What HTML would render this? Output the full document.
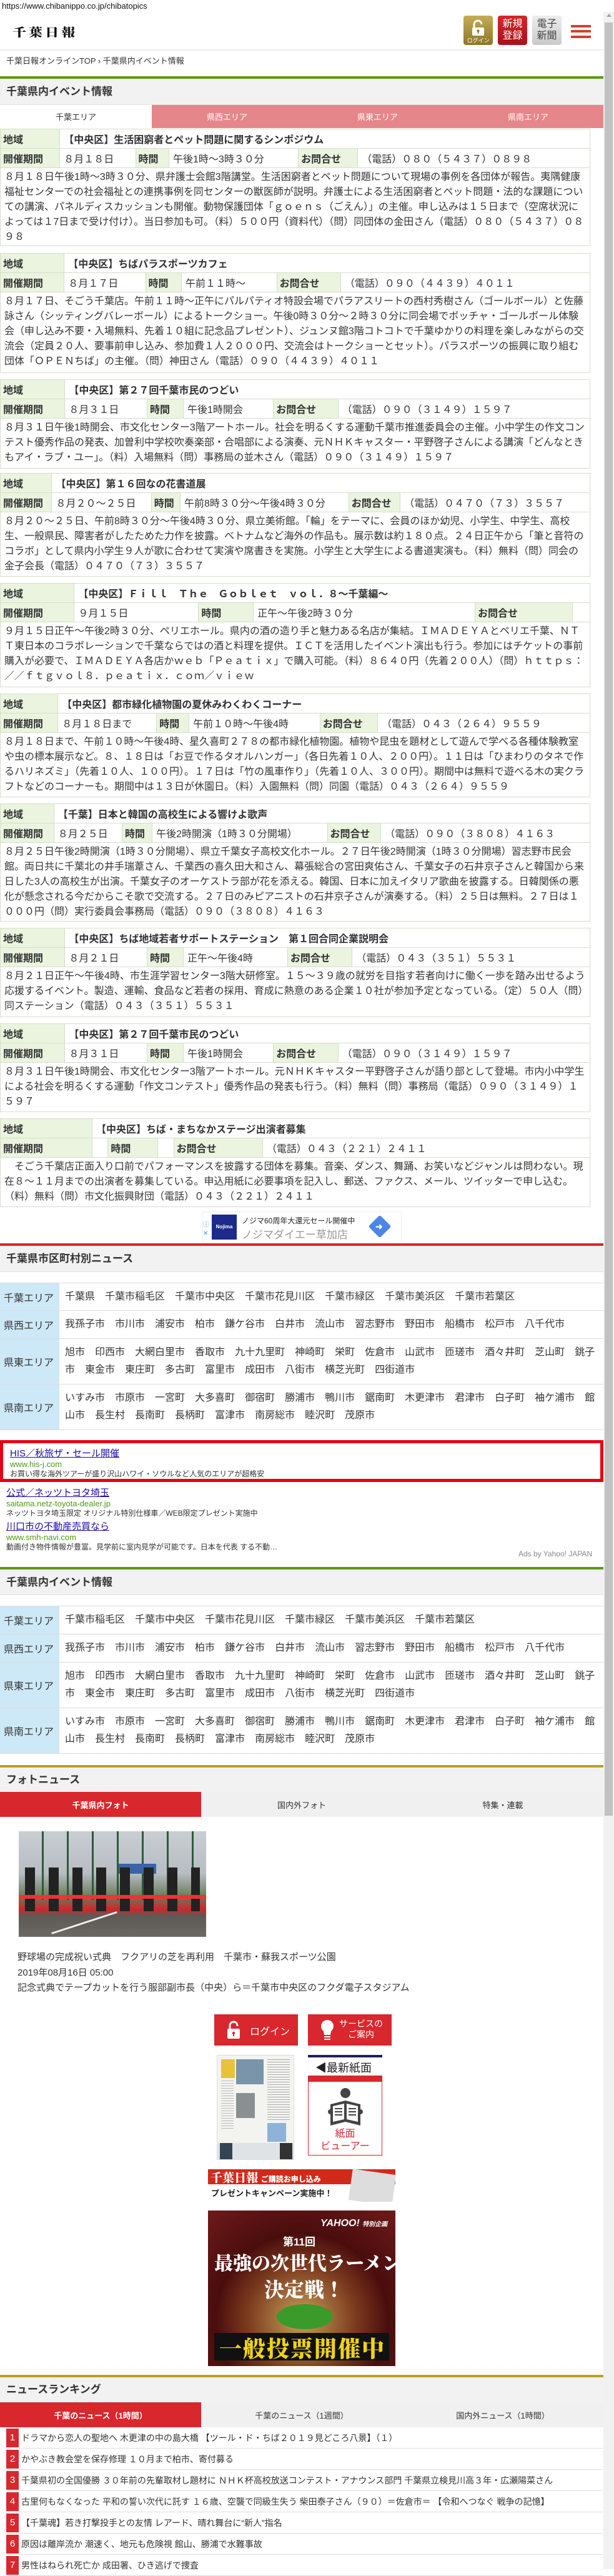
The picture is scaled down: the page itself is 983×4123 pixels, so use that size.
<!DOCTYPE html>
<html lang="ja"><head><meta charset="utf-8">
<style>
*{box-sizing:border-box}
html,body{margin:0;padding:0}
body{width:983px;height:4112px;position:relative;overflow:hidden;background:#fff;font-family:"Liberation Sans","Noto Sans CJK JP",sans-serif;color:#333}
.a{position:absolute}
.band{position:absolute;left:0;width:966px;background:#f2f2f2;font-size:17px;font-weight:bold;color:#333;padding-left:10px;border-bottom:1px solid #e2e2e2}
.evw{position:absolute;left:0;width:945px;overflow:hidden}
table.ev{width:945px;border-collapse:collapse;font-size:16px}
table.ev td{border:1px solid #d5dec8;padding:0 6px;height:31px;white-space:nowrap}
table.ev td.l{background:#eaf4df;font-weight:bold;padding:0 4px}
table.ev td.t{font-weight:bold}
.body{width:945px;border:1px solid #d5dec8;border-top:none;padding:3px 6px 3px 6px;line-height:24px;font-size:16px;overflow:hidden}
table.ar{width:966px;border-collapse:collapse;font-size:16px}
table.ar td{border-top:1px solid #ddd;border-bottom:1px solid #ddd;vertical-align:middle}
table.ar td.l{background:#cde8f6;width:95px;padding-left:6px;white-space:nowrap}
table.ar td.c{padding:0 8px 0 9px;line-height:28px}
table.ar td.c span{margin-right:16px}
.tabs{position:absolute;left:0;width:966px;height:40px;display:flex;font-size:13px}
.tabs div{flex:1;display:flex;align-items:center;justify-content:center;background:#f0f0f0;color:#333}
.tabs div.on{background:#d9272e;color:#fff;font-weight:bold}
.rk{position:absolute;left:10px;width:955px;height:34px;border-bottom:1px solid #ddd;font-size:14px;display:flex;align-items:center}
.rk b{display:inline-block;width:20px;height:30px;background:#d9272e;color:#fff;font-weight:normal;font-size:15px;text-align:center;line-height:30px;margin-right:4px}
.adl a{color:#1a0dab;text-decoration:underline;font-size:15px}
.adl .u{color:#4a9a1a;font-size:13px;line-height:16px}
.adl .d{color:#333;font-size:12px;line-height:15px}
</style></head><body>

<div class="a" style="left:3px;top:2px;font-size:13px;color:#111">https://www.chibanippo.co.jp/chibatopics</div>

<div class="a" style="left:966px;top:19px;width:17px;height:4093px;background:#f1f1f1"></div>
<div class="a" style="left:971px;top:22px;width:0;height:0;border-left:4px solid transparent;border-right:4px solid transparent;border-bottom:5px solid #a3a3a3"></div>
<div class="a" style="left:968px;top:36px;width:13px;height:2870px;background:#c1c1c1"></div>

<div class="a" style="left:20px;top:36px;font-family:'Noto Serif CJK SC','Liberation Serif',serif;font-weight:900;font-size:22px;letter-spacing:4px;color:#111;transform:scaleY(0.85)">千葉日報</div>
<div class="a" style="left:742px;top:25px;width:47px;height:47px;border-radius:4px;background:linear-gradient(#c5ad57,#8c772a)">
  <svg width="47" height="47" viewBox="0 0 47 47"><path d="M17 20 v-6 a6 6 0 0 1 12 0" fill="none" stroke="#fff" stroke-width="3"/><rect x="14" y="19" width="19" height="13" rx="2" fill="#fff"/><circle cx="23.5" cy="24.5" r="2" fill="#8c772a"/><rect x="22.7" y="25" width="1.6" height="4" fill="#8c772a"/><text x="23.5" y="43" font-size="9" fill="#fff" text-anchor="middle" font-family="Noto Sans CJK JP">ログイン</text></svg>
</div>
<div class="a" style="left:797px;top:25px;width:47px;height:47px;border-radius:4px;background:linear-gradient(#d7262c,#a8121a);color:#fff;font-size:16px;line-height:19px;text-align:center;padding-top:4px">新規<br>登録</div>
<div class="a" style="left:852px;top:25px;width:47px;height:47px;border-radius:4px;background:linear-gradient(#eee,#c9c9c9);color:#444;font-size:16px;line-height:19px;text-align:center;padding-top:4px">電子<br>新聞</div>
<div class="a" style="left:914px;top:40px;width:32px;height:4px;background:#d2412c"></div>
<div class="a" style="left:914px;top:48px;width:32px;height:4px;background:#d2412c"></div>
<div class="a" style="left:914px;top:57px;width:32px;height:4px;background:#d2412c"></div>
<div class="a" style="left:0;top:79px;width:966px;height:2px;background:#eee"></div>
<div class="a" style="left:10px;top:87px;font-size:13px;color:#333">千葉日報オンラインTOP › 千葉県内イベント情報</div>
<div class="a" style="left:0;top:122px;width:966px;height:4px;background:#5a9a10"></div>
<div class="band" style="top:126px;height:42px;line-height:42px">千葉県内イベント情報</div>
<div class="a" style="left:0;top:168px;width:966px;height:37px;display:flex;font-size:13px">
  <div style="width:243px;background:#fff;display:flex;align-items:center;justify-content:center">千葉エリア</div>
  <div style="flex:1;background:#e5878a;color:#fff;display:flex;align-items:center;justify-content:center">県西エリア</div>
  <div style="flex:1;background:#e5878a;color:#fff;display:flex;align-items:center;justify-content:center">県東エリア</div>
  <div style="flex:1;background:#e5878a;color:#fff;display:flex;align-items:center;justify-content:center">県南エリア</div>
</div>

<!-- events -->
<div class="evw" style="top:206px">
<table class="ev"><tr><td class="l">地域</td><td class="t" colspan="5">【中央区】生活困窮者とペット問題に関するシンポジウム</td></tr>
<tr><td class="l">開催期間</td><td>８月１８日</td><td class="l">時間</td><td>午後1時～3時３０分</td><td class="l">お問合せ</td><td>（電話）０８０（５４３７）０８９８</td></tr></table>
<div class="body" style="height:125px">８月１８日午後1時～3時３０分、県弁護士会館3階講堂。生活困窮者とペット問題について現場の事例を各団体が報告。夷隅健康福祉センターでの社会福祉との連携事例を同センターの獣医師が説明。弁護士による生活困窮者とペット問題・法的な課題についての講演、パネルディスカッションも開催。動物保護団体「ｇｏｅｎｓ（ごえん）」の主催。申し込みは１５日まで（空席状況によっては１7日まで受け付け）。当日参加も可。（料）５００円（資料代）（問）同団体の金田さん（電話）０８０（５４３７）０８９８</div>
</div>

<div class="evw" style="top:405px">
<table class="ev"><tr><td class="l">地域</td><td class="t" colspan="5">【中央区】ちばパラスポーツカフェ</td></tr>
<tr><td class="l">開催期間</td><td>８月１７日</td><td class="l">時間</td><td>午前１１時～</td><td class="l">お問合せ</td><td>（電話）０９０（４４３９）４０１１</td></tr></table>
<div class="body" style="height:129px">８月１７日、そごう千葉店。午前１１時～正午にパルパティオ特設会場でパラアスリートの西村秀樹さん（ゴールボール）と佐藤詠さん（シッティングバレーボール）によるトークショー。午後0時３０分～２時３０分に同会場でボッチャ・ゴールボール体験会（申し込み不要・入場無料、先着１０組に記念品プレゼント）、ジュンヌ館3階コトコトで千葉ゆかりの料理を楽しみながらの交流会（定員２０人、要事前申し込み、参加費１人２０００円、交流会はトークショーとセット）。パラスポーツの振興に取り組む団体「ＯＰＥＮちば」の主催。（問）神田さん（電話）０９０（４４３９）４０１１</div>
</div>

<div class="evw" style="top:607px">
<table class="ev"><tr><td class="l">地域</td><td class="t" colspan="5">【中央区】第２７回千葉市民のつどい</td></tr>
<tr><td class="l">開催期間</td><td>８月３１日</td><td class="l">時間</td><td>午後1時開会</td><td class="l">お問合せ</td><td>（電話）０９０（３１４９）１５９７</td></tr></table>
<div class="body" style="height:80px">８月３１日午後1時開会、市文化センター3階アートホール。社会を明るくする運動千葉市推進委員会の主催。小中学生の作文コンテスト優秀作品の発表、加曽利中学校吹奏楽部・合唱部による演奏、元ＮＨＫキャスター・平野啓子さんによる講演「どんなときもアイ・ラブ・ユー」。（料）入場無料（問）事務局の並木さん（電話）０９０（３１４９）１５９７</div>
</div>

<div class="evw" style="top:757px">
<table class="ev"><tr><td class="l">地域</td><td class="t" colspan="5">【中央区】第１６回なの花書道展</td></tr>
<tr><td class="l">開催期間</td><td>８月２０～２５日</td><td class="l">時間</td><td>午前8時３０分～午後4時３０分</td><td class="l">お問合せ</td><td>（電話）０４７０（７３）３５５７</td></tr></table>
<div class="body" style="height:103px">８月２０～２５日、午前8時３０分～午後4時３０分、県立美術館。「輪」をテーマに、会員のほか幼児、小学生、中学生、高校生、一般県民、障害者がしたためた力作を披露。ベトナムなど海外の作品も。展示数は約１８０点。２４日正午から「筆と音符のコラボ」として県内小学生９人が歌に合わせて実演や席書きを実施。小学生と大学生による書道実演も。（料）無料（問）同会の金子会長（電話）０４７０（７３）３５５７</div>
</div>

<div class="evw" style="top:933px">
<table class="ev"><tr><td class="l">地域</td><td class="t" colspan="5">【中央区】Ｆｉｌｌ　Ｔｈｅ　Ｇｏｂｌｅｔ　ｖｏｌ．８～千葉編～</td></tr>
<tr><td class="l">開催期間</td><td>９月１５日</td><td class="l">時間</td><td>正午～午後2時３０分</td><td class="l">お問合せ</td><td></td></tr></table>
<div class="body" style="height:104px">９月１５日正午～午後2時３０分、ペリエホール。県内の酒の造り手と魅力ある名店が集結。ＩＭＡＤＥＹＡとペリエ千葉、ＮＴＴ東日本のコラボレーションで千葉ならではの酒と料理を提供。ＩＣＴを活用したイベント演出も行う。参加にはチケットの事前購入が必要で、ＩＭＡＤＥＹＡ各店かｗｅｂ「Ｐｅａｔｉｘ」で購入可能。（料）８６４０円（先着２００人）（問）ｈｔｔｐｓ：／／ｆｔｇｖｏｌ８．ｐｅａｔｉｘ．ｃｏｍ／ｖｉｅｗ</div>
</div>

<div class="evw" style="top:1110px">
<table class="ev"><tr><td class="l">地域</td><td class="t" colspan="5">【中央区】都市緑化植物園の夏休みわくわくコーナー</td></tr>
<tr><td class="l">開催期間</td><td>８月１８日まで</td><td class="l">時間</td><td>午前１０時～午後4時</td><td class="l">お問合せ</td><td>（電話）０４３（２６４）９５５９</td></tr></table>
<div class="body" style="height:103px">８月１８日まで、午前１０時～午後4時、星久喜町２７８の都市緑化植物園。植物や昆虫を題材として遊んで学べる各種体験教室や虫の標本展示など。８、１８日は「お豆で作るタオルハンガー」（各日先着１０人、２００円）。１１日は「ひまわりのタネで作るハリネズミ」（先着１０人、１００円）。１７日は「竹の風車作り」（先着１０人、３００円）。期間中は無料で遊べる木の実クラフトなどのコーナーも。期間中は１３日が休園日。（料）入園無料（問）同園（電話）０４３（２６４）９５５９</div>
</div>

<div class="evw" style="top:1286px">
<table class="ev"><tr><td class="l">地域</td><td class="t" colspan="5">【千葉】日本と韓国の高校生による響けよ歌声</td></tr>
<tr><td class="l">開催期間</td><td>８月２５日</td><td class="l">時間</td><td>午後2時開演（1時３０分開場）</td><td class="l">お問合せ</td><td>（電話）０９０（３８０８）４１６３</td></tr></table>
<div class="body" style="height:126px">８月２５日午後2時開演（1時３０分開場）、県立千葉女子高校文化ホール。２７日午後2時開演（1時３０分開場）習志野市民会館。両日共に千葉北の井手瑞葦さん、千葉西の喜久田大和さん、幕張総合の宮田爽佑さん、千葉女子の石井京子さんと韓国から来日した3人の高校生が出演。千葉女子のオーケストラ部が花を添える。韓国、日本に加えイタリア歌曲を披露する。日韓関係の悪化が懸念される今だからこそ歌で交流する。２７日のみピアニストの石井京子さんが演奏する。（料）２５日は無料。２７日は１０００円（問）実行委員会事務局（電話）０９０（３８０８）４１６３</div>
</div>

<div class="evw" style="top:1485px">
<table class="ev"><tr><td class="l">地域</td><td class="t" colspan="5">【中央区】ちば地域若者サポートステーション　第１回合同企業説明会</td></tr>
<tr><td class="l">開催期間</td><td>８月２１日</td><td class="l">時間</td><td>正午～午後4時</td><td class="l">お問合せ</td><td>（電話）０４３（３５１）５５３１</td></tr></table>
<div class="body" style="height:80px">８月２１日正午～午後4時、市生涯学習センター3階大研修室。１５～３９歳の就労を目指す若者向けに働く一歩を踏み出せるよう応援するイベント。製造、運輸、食品など若者の採用、育成に熱意のある企業１０社が参加予定となっている。（定）５０人（問）同ステーション（電話）０４３（３５１）５５３１</div>
</div>

<div class="evw" style="top:1638px">
<table class="ev"><tr><td class="l">地域</td><td class="t" colspan="5">【中央区】第２７回千葉市民のつどい</td></tr>
<tr><td class="l">開催期間</td><td>８月３１日</td><td class="l">時間</td><td>午後1時開会</td><td class="l">お問合せ</td><td>（電話）０９０（３１４９）１５９７</td></tr></table>
<div class="body" style="height:79px">８月３１日午後1時開会、市文化センター3階アートホール。元ＮＨＫキャスター平野啓子さんが語り部として登場。市内小中学生による社会を明るくする運動「作文コンテスト」優秀作品の発表も行う。（料）無料（問）事務局（電話）０９０（３１４９）１５９７</div>
</div>

<div class="evw" style="top:1790px">
<table class="ev"><tr><td class="l">地域</td><td class="t" colspan="5">【中央区】ちば・まちなかステージ出演者募集</td></tr>
<tr><td class="l" style="width:147px">開催期間</td><td></td><td class="l">時間</td><td></td><td class="l">お問合せ</td><td>（電話）０４３（２２１）２４１１</td></tr></table>
<div class="body" style="height:79px">　そごう千葉店正面入り口前でパフォーマンスを披露する団体を募集。音楽、ダンス、舞踊、お笑いなどジャンルは問わない。現在８～１１月までの出演者を募集している。申込用紙に必要事項を記入し、郵送、ファクス、メール、ツイッターで申し込む。（料）無料（問）市文化振興財団（電話）０４３（２２１）２４１１</div>
</div>

<div class="a" style="left:324px;top:1939px;width:319px;height:50px;border:1px solid #eee;background:#fff">
  <div class="a" style="left:0;top:14px;font-size:10px;color:#39c;line-height:14px">ⓘ<br>✕</div>
  <div class="a" style="left:14px;top:4px;width:40px;height:40px;background:#1c2a8c;color:#fff;font-size:8px;font-weight:bold;text-align:center;line-height:40px">Nojima</div>
  <div class="a" style="left:62px;top:5px;font-size:12px;color:#222">ノジマ60周年大還元セール開催中</div>
  <div class="a" style="left:62px;top:22px;font-size:17px;color:#999">ノジマダイエー草加店</div>
  <div class="a" style="left:270px;top:10px;width:26px;height:26px;background:#4a86e8;transform:rotate(45deg);border-radius:3px"></div>
  <div class="a" style="left:276px;top:15px;color:#fff;font-size:14px;font-weight:bold">➜</div>
</div>

<div class="a" style="left:0;top:1990px;width:966px;height:4px;background:#d7252c"></div>
<div class="band" style="top:1994px;height:42px;line-height:42px">千葉県市区町村別ニュース</div>
<div class="a" style="left:0;top:2053px">
<table class="ar">
<tr style="height:44px"><td class="l">千葉エリア</td><td class="c"><span>千葉県</span><span>千葉市稲毛区</span><span>千葉市中央区</span><span>千葉市花見川区</span><span>千葉市緑区</span><span>千葉市美浜区</span><span>千葉市若葉区</span></td></tr>
<tr style="height:45px"><td class="l">県西エリア</td><td class="c"><span>我孫子市</span><span>市川市</span><span>浦安市</span><span>柏市</span><span>鎌ケ谷市</span><span>白井市</span><span>流山市</span><span>習志野市</span><span>野田市</span><span>船橋市</span><span>松戸市</span><span>八千代市</span></td></tr>
<tr style="height:73px"><td class="l">県東エリア</td><td class="c"><span>旭市</span><span>印西市</span><span>大網白里市</span><span>香取市</span><span>九十九里町</span><span>神崎町</span><span>栄町</span><span>佐倉市</span><span>山武市</span><span>匝瑳市</span><span>酒々井町</span><span>芝山町</span><span>銚子市</span><span>東金市</span><span>東庄町</span><span>多古町</span><span>富里市</span><span>成田市</span><span>八街市</span><span>横芝光町</span><span>四街道市</span></td></tr>
<tr style="height:73px"><td class="l">県南エリア</td><td class="c"><span>いすみ市</span><span>市原市</span><span>一宮町</span><span>大多喜町</span><span>御宿町</span><span>勝浦市</span><span>鴨川市</span><span>鋸南町</span><span>木更津市</span><span>君津市</span><span>白子町</span><span>袖ケ浦市</span><span>館山市</span><span>長生村</span><span>長南町</span><span>長柄町</span><span>富津市</span><span>南房総市</span><span>睦沢町</span><span>茂原市</span></td></tr>
</table></div>

<div class="a adl" style="left:0;top:2305px;width:966px;height:67px;border:5px solid #e60012;padding:5px 0 0 11px">
  <a>HIS／秋旅ザ・セール開催</a><div class="u">www.his-j.com</div><div class="d">お買い得な海外ツアーが盛り沢山ハワイ・ソウルなど人気のエリアが超格安</div>
</div>
<div class="a adl" style="left:10px;top:2378px">
  <a>公式／ネッツトヨタ埼玉</a><div class="u">saitama.netz-toyota-dealer.jp</div><div class="d">ネッツトヨタ埼玉限定 オリジナル特別仕様車／WEB限定プレゼント実施中</div>
</div>
<div class="a adl" style="left:10px;top:2432px">
  <a>川口市の不動産売買なら</a><div class="u">www.smh-navi.com</div><div class="d">動画付き物件情報が豊富。見学前に室内見学が可能です。日本を代表 する不動…</div>
</div>
<div class="a" style="left:830px;top:2480px;font-size:12px;color:#888">Ads by Yahoo! JAPAN</div>

<div class="a" style="left:0;top:2508px;width:966px;height:4px;background:#5a9a10"></div>
<div class="band" style="top:2512px;height:41px;line-height:41px">千葉県内イベント情報</div>
<div class="a" style="left:0;top:2570px">
<table class="ar">
<tr style="height:45px"><td class="l">千葉エリア</td><td class="c"><span>千葉市稲毛区</span><span>千葉市中央区</span><span>千葉市花見川区</span><span>千葉市緑区</span><span>千葉市美浜区</span><span>千葉市若葉区</span></td></tr>
<tr style="height:45px"><td class="l">県西エリア</td><td class="c"><span>我孫子市</span><span>市川市</span><span>浦安市</span><span>柏市</span><span>鎌ケ谷市</span><span>白井市</span><span>流山市</span><span>習志野市</span><span>野田市</span><span>船橋市</span><span>松戸市</span><span>八千代市</span></td></tr>
<tr style="height:73px"><td class="l">県東エリア</td><td class="c"><span>旭市</span><span>印西市</span><span>大網白里市</span><span>香取市</span><span>九十九里町</span><span>神崎町</span><span>栄町</span><span>佐倉市</span><span>山武市</span><span>匝瑳市</span><span>酒々井町</span><span>芝山町</span><span>銚子市</span><span>東金市</span><span>東庄町</span><span>多古町</span><span>富里市</span><span>成田市</span><span>八街市</span><span>横芝光町</span><span>四街道市</span></td></tr>
<tr style="height:73px"><td class="l">県南エリア</td><td class="c"><span>いすみ市</span><span>市原市</span><span>一宮町</span><span>大多喜町</span><span>御宿町</span><span>勝浦市</span><span>鴨川市</span><span>鋸南町</span><span>木更津市</span><span>君津市</span><span>白子町</span><span>袖ケ浦市</span><span>館山市</span><span>長生村</span><span>長南町</span><span>長柄町</span><span>富津市</span><span>南房総市</span><span>睦沢町</span><span>茂原市</span></td></tr>
</table></div>

<div class="a" style="left:0;top:2825px;width:966px;height:4px;background:#b8a21e"></div>
<div class="band" style="top:2829px;height:39px;line-height:39px;border:none">フォトニュース</div>
<div class="tabs" style="top:2868px"><div class="on">千葉県内フォト</div><div>国内外フォト</div><div>特集・連載</div></div>
<div class="a" style="left:30px;top:2931px;width:300px;height:169px;overflow:hidden;background:linear-gradient(#c9ced3 0%,#b7bdc2 40%,#6a7a5a 62%,#d0262a 74%,#5d5a55 80%,#6b6862 100%)">
  <div class="a" style="left:0;top:0;width:300px;height:110px;background:repeating-linear-gradient(90deg,transparent 0 37px,#2f5a3a 37px 40px)"></div>
  <div class="a" style="left:160px;top:52px;width:60px;height:16px;background:#3a64a8"></div>
  <div class="a" style="left:10px;top:58px;width:280px;height:70px;background:repeating-linear-gradient(90deg,#222 0 16px,transparent 16px 38px)"></div>
  <div class="a" style="left:0;top:102px;width:300px;height:6px;background:#e33"></div>
  <div class="a" style="left:50px;top:145px;width:110px;height:3px;background:#eee;transform:rotate(-18deg)"></div>
</div>
<div class="a" style="left:28px;top:3121px;font-size:15px;line-height:24.5px;color:#333">野球場の完成祝い式典　フクアリの芝を再利用　千葉市・蘇我スポーツ公園<br>2019年08月16日 05:00<br>記念式典でテープカットを行う服部副市長（中央）ら＝千葉市中央区のフクダ電子スタジアム</div>

<div class="a" style="left:343px;top:3224px;width:134px;height:50px;background:#d9272e;color:#fff;font-size:16px">
  <svg class="a" style="left:20px;top:10px" width="22" height="30" viewBox="0 0 22 30"><path d="M5 13 V8 a6 6 0 0 1 12 0 V9" fill="none" stroke="#fff" stroke-width="3"/><rect x="1" y="13" width="20" height="16" rx="2" fill="#fff"/><circle cx="11" cy="20" r="2.2" fill="#d9272e"/><rect x="10" y="20" width="2" height="5" fill="#d9272e"/></svg>
  <div class="a" style="left:57px;top:14px">ログイン</div>
</div>
<div class="a" style="left:493px;top:3224px;width:134px;height:50px;background:#d9272e;color:#fff;font-size:14px">
  <svg class="a" style="left:20px;top:8px" width="22" height="36" viewBox="0 0 22 36"><path d="M11 1 a10 10 0 0 1 6 18 l-1 6 h-10 l-1 -6 a10 10 0 0 1 6 -18z" fill="#fff"/><rect x="6" y="27" width="10" height="2" fill="#fff"/><rect x="6" y="31" width="10" height="2" fill="#fff"/></svg>
  <div class="a" style="left:50px;top:7px;line-height:17px;text-align:center">サービスの<br>ご案内</div>
</div>

<div class="a" style="left:347px;top:3289px;width:124px;height:168px;background:#f3f3f0;border:1px solid #ddd;overflow:hidden">
  <div class="a" style="left:6px;top:6px;width:22px;height:30px;background:#e8c23a"></div>
  <div class="a" style="left:30px;top:6px;width:44px;height:40px;background:#7a94aa"></div>
  <div class="a" style="left:30px;top:60px;width:30px;height:40px;background:#8a8f92"></div>
  <div class="a" style="left:80px;top:6px;width:36px;height:100px;background:repeating-linear-gradient(#aaa 0 1px,transparent 1px 4px)"></div>
  <div class="a" style="left:6px;top:40px;width:20px;height:80px;background:repeating-linear-gradient(#bbb 0 1px,transparent 1px 4px)"></div>
  <div class="a" style="left:80px;top:108px;width:30px;height:30px;background:#8fb2d8"></div>
  <div class="a" style="left:0;top:140px;width:124px;height:28px;background:#dfe3e6"></div>
  <div class="a" style="left:4px;top:140px;width:20px;height:28px;background:#345"></div>
  <div class="a" style="left:100px;top:140px;width:20px;height:28px;background:#333"></div>
</div>
<div class="a" style="left:493px;top:3289px;width:119px;height:4px;background:#1e1e5c"></div>
<div class="a" style="left:505px;top:3296px;font-size:18px;color:#222">◀最新紙面</div>
<div class="a" style="left:493px;top:3322px;width:119px;height:10px;background:#d9272e"></div>
<div class="a" style="left:493px;top:3332px;width:119px;height:118px;border:1px solid #d9272e;border-top:none">
  <svg class="a" style="left:27px;top:8px" width="64" height="64" viewBox="0 0 64 64"><circle cx="32" cy="10" r="8" fill="#444"/><path d="M8 28 L32 22 L56 28 L56 62 L32 56 L8 62Z" fill="#444"/><path d="M12 31 L30 27 L30 52 L12 56Z M34 27 L52 31 L52 56 L34 52Z" fill="#fff"/><path d="M15 35h12M15 40h12M15 45h12M37 35h12M37 40h12M37 45h12" stroke="#444" stroke-width="2"/><circle cx="8" cy="40" r="4" fill="#444"/><circle cx="56" cy="40" r="4" fill="#444"/></svg>
  <div class="a" style="left:0;top:74px;width:117px;text-align:center;font-size:16px;line-height:20px;color:#d9272e">紙面<br>ビューアー</div>
</div>

<div class="a" style="left:333px;top:3472px;width:300px;height:52px;overflow:hidden;background:#fff">
  <div class="a" style="left:0;top:0;width:300px;height:24px;background:#d22a1a"></div>
  <div class="a" style="left:4px;top:0;font-family:'Noto Serif CJK SC',serif;font-weight:900;font-size:19px;color:#fff;line-height:26px">千葉日報 <span style="font-size:12px;font-family:'Noto Sans CJK JP';">ご購読お申し込み</span></div>
  <div class="a" style="left:5px;top:28px;font-size:13px;font-weight:bold;color:#222">プレゼントキャンペーン実施中！</div>
  <div class="a" style="left:228px;top:4px;width:70px;height:50px;background:#ddd;transform:rotate(8deg)"></div>
</div>

<div class="a" style="left:333px;top:3538px;width:300px;height:249px;overflow:hidden;background:radial-gradient(circle at 50% 70%,#c9a25a 0,#7b3a1e 38%,#4a0d0d 60%,#6e1a1a 100%)">
  <div class="a" style="left:180px;top:12px;color:#fff;font-size:16px;font-weight:bold;font-style:italic">YAHOO! <span style="font-size:10px">特別企画</span></div>
  <div class="a" style="left:120px;top:36px;color:#fff;font-size:17px;font-weight:bold">第11回</div>
  <div class="a" style="left:10px;top:60px;color:#fff;font-size:30px;font-weight:900;font-family:'Noto Serif CJK SC',serif;white-space:nowrap">最強の次世代ラーメン</div>
  <div class="a" style="left:90px;top:102px;color:#fff;font-size:32px;font-weight:900;font-family:'Noto Serif CJK SC',serif">決定戦！</div>
  <div class="a" style="left:110px;top:150px;width:90px;height:40px;border-radius:50%;background:#3a9a2a"></div>
  <div class="a" style="left:10px;top:196px;width:280px;height:44px;background:#111"></div>
  <div class="a" style="left:18px;top:194px;color:#f2d21a;font-size:36px;font-weight:900;font-family:'Noto Serif CJK SC',serif;letter-spacing:2px">一般投票開催中</div>
</div>

<div class="a" style="left:0;top:3801px;width:966px;height:4px;background:#b8a21e"></div>
<div class="band" style="top:3805px;height:40px;line-height:40px;border:none">ニュースランキング</div>
<div class="tabs" style="top:3845px"><div class="on">千葉のニュース（1時間）</div><div>千葉のニュース（1週間）</div><div>国内外ニュース（1時間）</div></div>
<div class="rk" style="top:3885px"><b>1</b>ドラマから恋人の聖地へ 木更津の中の島大橋 【ツール・ド・ちば２０１９見どころ八景】（１）</div>
<div class="rk" style="top:3919px"><b>2</b>かやぶき教会堂を保存修理 １０月まで柏市、寄付募る</div>
<div class="rk" style="top:3953px"><b>3</b>千葉県初の全国優勝 ３０年前の先輩取材し題材に ＮＨＫ杯高校放送コンテスト・アナウンス部門 千葉県立検見川高３年・広瀬陽菜さん</div>
<div class="rk" style="top:3987px"><b>4</b>古里何もなくなった 平和の誓い次代に託す １６歳、空襲で同級生失う 柴田泰子さん（９０）＝佐倉市＝ 【令和へつなぐ 戦争の記憶】</div>
<div class="rk" style="top:4021px"><b>5</b>【千葉魂】若き打撃投手との友情 レアード、晴れ舞台に“新人”指名</div>
<div class="rk" style="top:4055px"><b>6</b>原因は離岸流か 潮速く、地元も危険視 館山、勝浦で水難事故</div>
<div class="rk" style="top:4089px"><b>7</b>男性はねられ死亡か 成田署、ひき逃げで捜査</div>

</body></html>
